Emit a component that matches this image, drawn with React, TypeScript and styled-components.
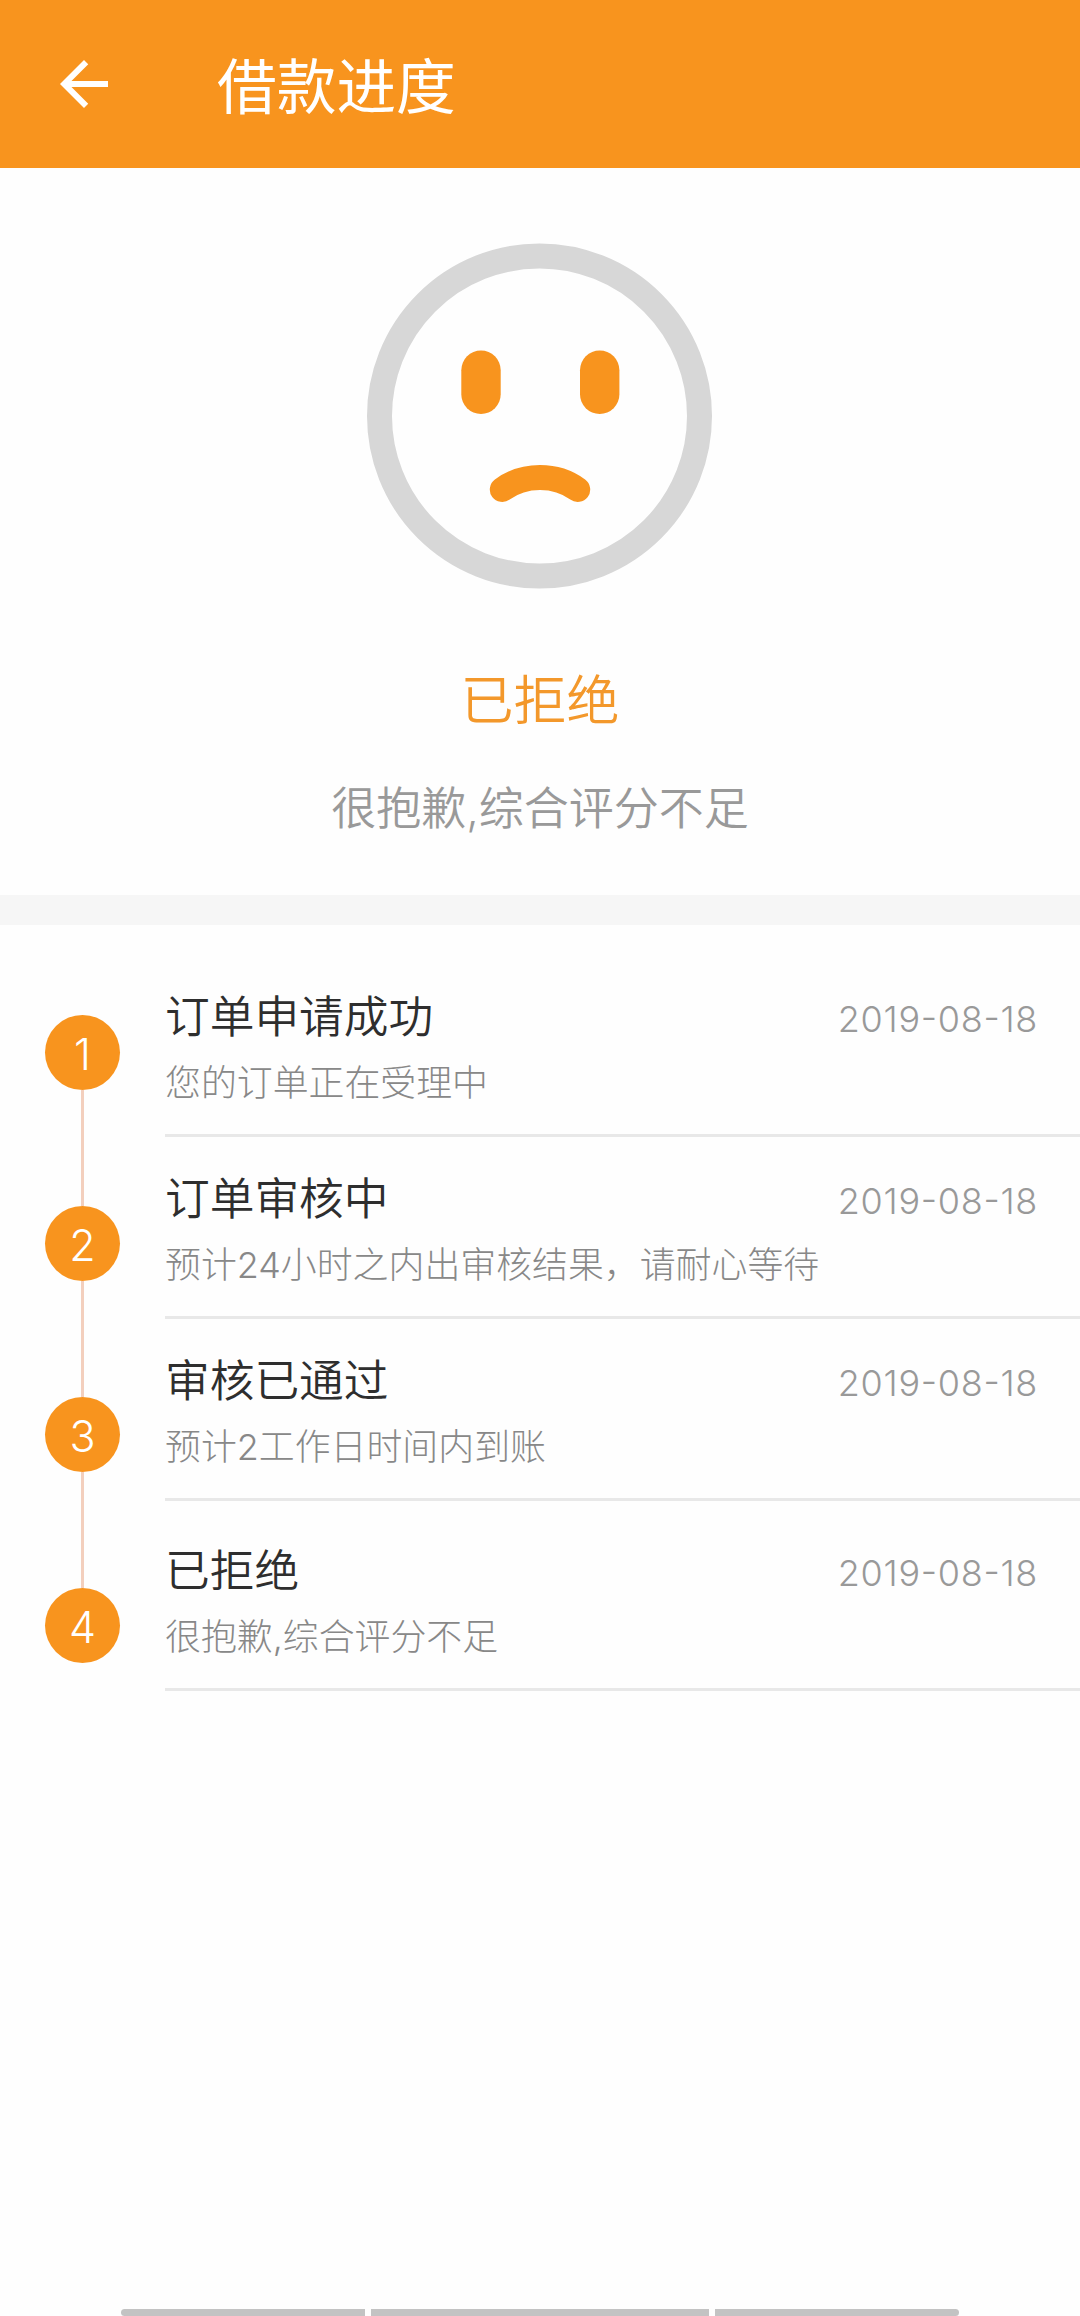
import React from "react";
import styled, { createGlobalStyle } from "styled-components";

const ORANGE = "#f8941e";

const GlobalStyle = createGlobalStyle`
  * { box-sizing: border-box; }
  body {
    margin: 0;
    background: #fefefe;
    font-family: Inter, "Noto Sans CJK SC", sans-serif;
    font-weight: 350;
  }
`;

const Screen = styled.div`
  display: flex;
  flex-direction: column;
  width: 1080px;
  height: 2316px;
  overflow: hidden;
  background: #fefefe;
`;

const Header = styled.header`
  display: flex;
  align-items: center;
  flex: none;
  height: 168px;
  padding-left: 48px;
  background: ${ORANGE};
  color: #fff;
`;

const BackButton = styled.button`
  display: flex;
  width: 72px;
  height: 72px;
  padding: 0;
  border: 0;
  background: none;
  color: inherit;
`;

const HeaderTitle = styled.h1`
  margin: 6px 0 0 97px;
  font-size: 59.7px;
  line-height: 80px;
  font-weight: 400;
`;

const Result = styled.section`
  display: flex;
  flex-direction: column;
  align-items: center;
  flex: none;
  height: 727px;
  padding-top: 75px;
`;

const ResultTitle = styled.h2`
  margin: 72px 0 0;
  font-size: 53px;
  line-height: 80px;
  font-weight: 350;
  color: #f3982b;
`;

const ResultText = styled.p`
  margin: 35px 0 0;
  font-size: 45px;
  line-height: 66px;
  color: #999;
`;

const Divider = styled.div`
  flex: none;
  height: 30px;
  background: #f6f6f6;
`;

const Timeline = styled.section`
  display: flex;
  padding: 30px 0 0 45px;
`;

const Rail = styled.div`
  display: flex;
  flex-direction: column;
  align-items: center;
  width: 75px;
  padding-top: 60px;
`;

const StepDot = styled.div`
  display: flex;
  align-items: center;
  justify-content: center;
  width: 75px;
  height: 75px;
  padding-top: 4px;
  border-radius: 50%;
  background: ${ORANGE};
  color: #fff;
  font-size: 43px;
  line-height: 1;
`;

const Connector = styled.div`
  width: 3px;
  height: 116px;
  background: #f3cfbd;
`;

const Steps = styled.div`
  flex: 1;
  margin-left: 45px;
`;

const Step = styled.article<{ $last: boolean }>`
  height: ${(p) => (p.$last ? 190 : 182)}px;
  padding-top: ${(p) => (p.$last ? 40 : 32)}px;
  border-bottom: 3px solid #e8e8e8;
`;

const StepHead = styled.div`
  display: flex;
  justify-content: space-between;
  height: 60px;
  padding-right: 42px;
`;

const StepTitle = styled.h3`
  margin: 0;
  font-size: 44.7px;
  line-height: 60px;
  font-weight: 350;
  color: #2e2e2e;
`;

const StepDate = styled.time`
  padding-top: 2px;
  font-size: 36px;
  line-height: 60px;
  letter-spacing: 0.7px;
  font-feature-settings: "case";
  font-weight: 350;
  color: #999;
`;

const StepNote = styled.p`
  margin: 12px 0 0;
  font-size: 35.9px;
  line-height: 48px;
  font-weight: 300;
  color: #888;
`;

const NavHints = styled.footer`
  display: flex;
  gap: 6px;
  height: 7px;
  margin: auto 121px 0;
`;

const NavHint = styled.div<{ $width: number; $radius?: string }>`
  width: ${(p) => p.$width}px;
  border-radius: ${(p) => p.$radius ?? "0"};
  background: #c3c3c3;
`;

const steps = [
  { title: "订单申请成功", note: "您的订单正在受理中", date: "2019-08-18" },
  { title: "订单审核中", note: "预计24小时之内出审核结果，请耐心等待", date: "2019-08-18" },
  { title: "审核已通过", note: "预计2工作日时间内到账", date: "2019-08-18" },
  { title: "已拒绝", note: "很抱歉,综合评分不足", date: "2019-08-18" },
];

const BackArrow = () => (
  <svg width="72" height="72" viewBox="0 0 24 24" fill="currentColor">
    <path d="M20 11H7.83l5.59-5.59L12 4l-8 8 8 8 1.41-1.41L7.83 13H20v-2z" />
  </svg>
);

const SadFace = () => (
  <svg width="346" height="346" viewBox="0 0 346 346" fill="none">
    <circle cx="172.5" cy="173" r="160" stroke="#d7d7d7" strokeWidth="25" />
    <rect x="94.3" y="107.5" width="39.4" height="63.5" rx="19.7" fill={ORANGE} />
    <rect x="213" y="107.5" width="39.4" height="63.5" rx="19.7" fill={ORANGE} />
    <path
      d="M135.3 246.5C157 230.5 189 230.5 210.7 246.5"
      stroke={ORANGE}
      strokeWidth="25"
      strokeLinecap="round"
    />
  </svg>
);

export default function App() {
  return (
    <>
      <GlobalStyle />
      <Screen>
        <Header>
          <BackButton aria-label="返回">
            <BackArrow />
          </BackButton>
          <HeaderTitle>借款进度</HeaderTitle>
        </Header>
        <Result>
          <SadFace />
          <ResultTitle>已拒绝</ResultTitle>
          <ResultText>很抱歉,综合评分不足</ResultText>
        </Result>
        <Divider />
        <Timeline>
          <Rail>
            {steps.map((step, i) => (
              <React.Fragment key={step.title}>
                {i > 0 && <Connector />}
                <StepDot>{i + 1}</StepDot>
              </React.Fragment>
            ))}
          </Rail>
          <Steps>
            {steps.map((step, i) => (
              <Step key={step.title} $last={i === steps.length - 1}>
                <StepHead>
                  <StepTitle>{step.title}</StepTitle>
                  <StepDate>{step.date}</StepDate>
                </StepHead>
                <StepNote>{step.note}</StepNote>
              </Step>
            ))}
          </Steps>
        </Timeline>
        <NavHints>
          <NavHint $width={244} $radius="6px 0 0 6px" />
          <NavHint $width={338} />
          <NavHint $width={244} $radius="0 6px 6px 0" />
        </NavHints>
      </Screen>
    </>
  );
}
